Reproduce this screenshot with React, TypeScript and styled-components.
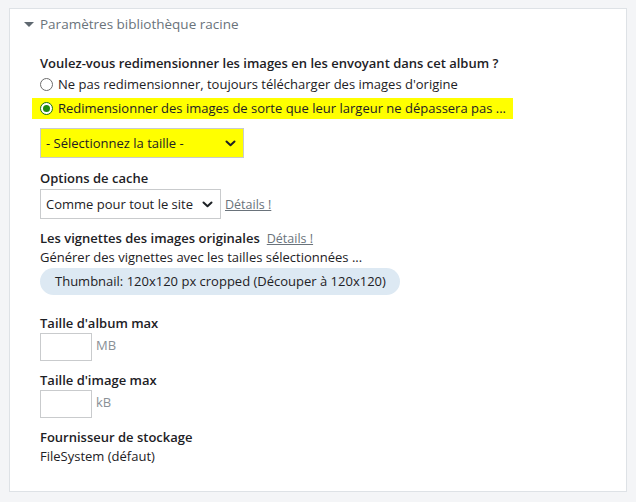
import React from "react";
import styled, { createGlobalStyle } from "styled-components";

const Global = createGlobalStyle`
  html, body { margin: 0; padding: 0; background: #f4f5f7; }
  body { font-family: "Open Sans", "Liberation Sans", sans-serif; font-size: 13px; color: #1d2125; }
  #root { padding: 8px 7px 8px 9px; }
`;

const Panel = styled.section`
  background: #fff;
  border: 1px solid #dee2e6;
  width: 618px;
  height: 484px;
  box-sizing: border-box;
  padding: 6px 0 0 0;
`;

const Legend = styled.div`
  display: flex;
  align-items: center;
  gap: 6px;
  padding-left: 14px;
  height: 18px;
  color: #6a737b;
  font-size: 13.5px;
`;

const Caret = styled.span`
  width: 0;
  height: 0;
  border-left: 5px solid transparent;
  border-right: 5px solid transparent;
  border-top: 5px solid #5f6870;
`;

const Body = styled.div`
  padding: 21px 0 0 30px;
  display: flex;
  flex-direction: column;
  align-items: flex-start;
`;

const Label = styled.div<{ $mt?: number }>`
  font-weight: 600;
  line-height: 19px;
  margin-top: ${(p) => p.$mt ?? 0}px;
  display: flex;
  align-items: baseline;
  gap: 7px;
`;

const RadioRow = styled.label<{ $hl?: boolean }>`
  display: flex;
  align-items: center;
  gap: 5px;
  line-height: 21px;
  height: 21px;
  background: ${(p) => (p.$hl ? "#ffff00" : "transparent")};
  margin-left: ${(p) => (p.$hl ? -8 : 0)}px;
  padding: ${(p) => (p.$hl ? "0 7px 0 8px" : "0")};
  margin-top: ${(p) => (p.$hl ? 3 : 1)}px;
  color: #1d2125;
`;

const Radio = styled.span<{ $checked?: boolean }>`
  width: 13px;
  height: 13px;
  border-radius: 50%;
  box-sizing: border-box;
  border: 1px solid ${(p) => (p.$checked ? "#1b6f0f" : "#6c6c6c")};
  background: #fff;
  display: flex;
  align-items: center;
  justify-content: center;
  &::after {
    content: "";
    display: ${(p) => (p.$checked ? "block" : "none")};
    width: 7px;
    height: 7px;
    border-radius: 50%;
    background: #1f8a12;
  }
`;

const Select = styled.div<{ $w: number; $hl?: boolean; $mt?: number }>`
  width: ${(p) => p.$w}px;
  height: 30px;
  box-sizing: border-box;
  border: 1px solid #c9cbcd;
  background: ${(p) => (p.$hl ? "#ffff00" : "#fff")};
  display: flex;
  align-items: center;
  justify-content: space-between;
  padding: 0 7px 0 5px;
  margin-top: ${(p) => p.$mt ?? 0}px;
  color: #1d2125;
`;

const Row = styled.div<{ $mt?: number }>`
  display: flex;
  align-items: center;
  gap: 4px;
  margin-top: ${(p) => p.$mt ?? 0}px;
`;

const Link = styled.a`
  color: #6a737b;
  text-decoration: underline;
  font-weight: 400;
  font-size: 12.5px;
  cursor: pointer;
`;

const Text = styled.div`
  line-height: 19px;
`;

const Pill = styled.div`
  background: #dde9f3;
  border-radius: 14px;
  height: 27px;
  line-height: 27px;
  padding: 0 14px 0 15px;
  margin-top: 1px;
  color: #1d2125;
`;

const NumInput = styled.div`
  width: 52px;
  height: 28px;
  box-sizing: border-box;
  border: 1px solid #c9cbcd;
  background: #fff;
`;

const Unit = styled.span`
  color: #8a9096;
  align-self: flex-start;
  margin-top: 3px;
`;

const Chevron = () => (
  <svg width="11" height="7" viewBox="0 0 11 7">
    <path d="M1.5 1.5 L5.5 5.3 L9.5 1.5" fill="none" stroke="#1d2125" strokeWidth="2" strokeLinecap="round" strokeLinejoin="round" />
  </svg>
);

export default function App() {
  return (
    <>
      <Global />
      <Panel>
        <Legend>
          <Caret />
          <span>Paramètres bibliothèque racine</span>
        </Legend>
        <Body>
          <Label>Voulez-vous redimensionner les images en les envoyant dans cet album ?</Label>
          <RadioRow>
            <Radio />
            Ne pas redimensionner, toujours télécharger des images d'origine
          </RadioRow>
          <RadioRow $hl>
            <Radio $checked />
            Redimensionner des images de sorte que leur largeur ne dépassera pas ...
          </RadioRow>
          <Select $w={204} $hl $mt={9}>
            <span>- Sélectionnez la taille -</span>
            <Chevron />
          </Select>
          <Label $mt={11}>Options de cache</Label>
          <Row $mt={1}>
            <Select $w={181}>
              <span>Comme pour tout le site</span>
              <Chevron />
            </Select>
            <Link>Détails !</Link>
          </Row>
          <Label $mt={10}>
            Les vignettes des images originales <Link>Détails !</Link>
          </Label>
          <Text>Générer des vignettes avec les tailles sélectionnées ...</Text>
          <Pill>Thumbnail: 120x120 px cropped (Découper à 120x120)</Pill>
          <Label $mt={19}>Taille d'album max</Label>
          <Row>
            <NumInput />
            <Unit>MB</Unit>
          </Row>
          <Label $mt={10}>Taille d'image max</Label>
          <Row>
            <NumInput />
            <Unit>kB</Unit>
          </Row>
          <Label $mt={10}>Fournisseur de stockage</Label>
          <Text>FileSystem (défaut)</Text>
        </Body>
      </Panel>
    </>
  );
}
